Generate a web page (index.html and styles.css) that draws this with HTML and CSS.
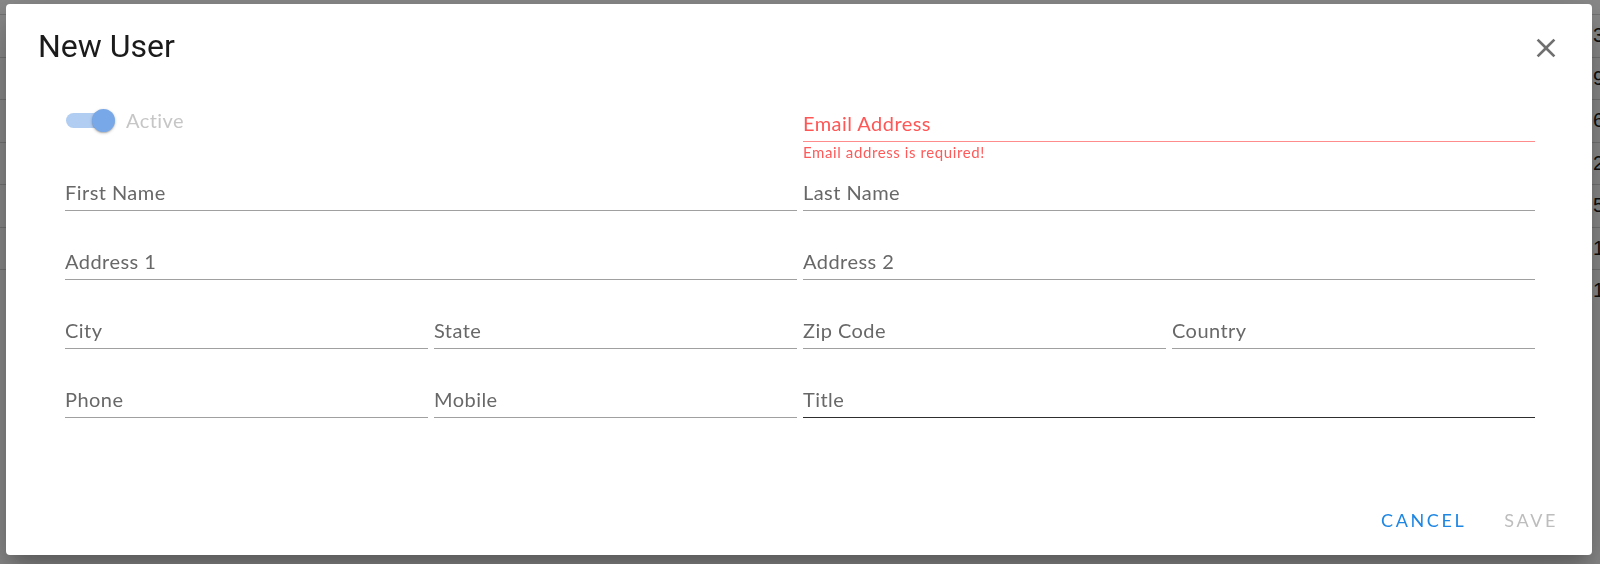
FILE: index.html
```html
<!DOCTYPE html>
<html lang="en">
<head>
<meta charset="utf-8">
<title>New User</title>
<link rel="stylesheet" href="styles.css">
</head>
<body>
<div class="page">
  <div class="bg-row">3</div>
  <div class="bg-row">9</div>
  <div class="bg-row">6</div>
  <div class="bg-row">2</div>
  <div class="bg-row">5</div>
  <div class="bg-row">1</div>
  <div class="bg-row bg-row-last">1</div>
</div>
<div class="backdrop"></div>
<div class="dialog" role="dialog">
  <header class="dialog-header">
    <h2 class="dialog-title">New User</h2>
    <button class="close-btn" type="button" aria-label="Close">
      <svg viewBox="0 0 24 24" width="32" height="32"><path d="M19 6.41L17.59 5 12 10.59 6.41 5 5 6.41 10.59 12 5 17.59 6.41 19 12 13.41 17.59 19 19 17.59 13.41 12z"/></svg>
    </button>
  </header>
  <form class="form-grid">
    <div class="field span-2">
      <div class="switch-row">
        <span class="switch"><span class="switch-track"></span><span class="switch-thumb"></span></span>
        <span class="switch-label">Active</span>
      </div>
    </div>
    <div class="field span-2 error">
      <div class="control"><span class="label">Email Address</span></div>
      <div class="helper">Email address is required!</div>
    </div>
    <div class="field span-2"><div class="control"><span class="label">First Name</span></div></div>
    <div class="field span-2"><div class="control"><span class="label">Last Name</span></div></div>
    <div class="field span-2"><div class="control"><span class="label">Address 1</span></div></div>
    <div class="field span-2"><div class="control"><span class="label">Address 2</span></div></div>
    <div class="field"><div class="control"><span class="label">City</span></div></div>
    <div class="field"><div class="control"><span class="label">State</span></div></div>
    <div class="field"><div class="control"><span class="label">Zip Code</span></div></div>
    <div class="field"><div class="control"><span class="label">Country</span></div></div>
    <div class="field"><div class="control"><span class="label">Phone</span></div></div>
    <div class="field"><div class="control"><span class="label">Mobile</span></div></div>
    <div class="field span-2 hovered"><div class="control"><span class="label">Title</span></div></div>
  </form>
  <div class="actions">
    <button class="btn btn-primary" type="button">Cancel</button>
    <button class="btn btn-disabled" type="button">Save</button>
  </div>
</div>
</body>
</html>
```
FILE: styles.css
```css
* { box-sizing: border-box; }
html, body { margin: 0; height: 100%; }
body {
  background: #fff;
  font-family: Lato, "Open Sans", sans-serif;
  overflow: hidden;
  position: relative;
}
.page { padding-top: 14px; }
.bg-row {
  height: 42.5px;
  border-top: 1px solid #d6d6d6;
  padding-left: 1593px;
  display: flex;
  align-items: center;
  white-space: nowrap;
  overflow: hidden;
  font: 20px "Liberation Sans", sans-serif;
  color: #1a1a1a;
}
.backdrop {
  position: fixed;
  inset: 0;
  background: rgba(0, 0, 0, 0.46);
}
.dialog {
  position: absolute;
  left: 6px;
  top: 4px;
  width: 1586px;
  height: 551px;
  background: #fff;
  border-radius: 4px;
  box-shadow: 0 11px 15px -7px rgba(0,0,0,.2), 0 24px 38px 3px rgba(0,0,0,.14), 0 9px 46px 8px rgba(0,0,0,.12);
  display: flex;
  flex-direction: column;
}
.dialog-header {
  display: flex;
  align-items: center;
  justify-content: space-between;
  padding: 24px 30px 0 32px;
}
.dialog-title {
  margin: 0;
  font: 400 32px/36px Roboto, sans-serif;
  color: #1b1b1b;
}
.close-btn {
  border: 0;
  background: none;
  padding: 0;
  margin-top: 3px;
  width: 32px;
  height: 32px;
  display: flex;
  cursor: pointer;
}
.close-btn svg { fill: #707070; }
.form-grid {
  display: grid;
  grid-template-columns: repeat(4, 1fr);
  column-gap: 6px;
  margin: 30px 57px 0 59px;
}
.span-2 { grid-column: span 2; }
.field { height: 69px; }
.control {
  height: 48px;
  border-bottom: 1px solid #a0a0a0;
  display: flex;
  align-items: flex-end;
  padding-bottom: 6px;
}
.label {
  font-size: 20px;
  line-height: 1.2;
  letter-spacing: 0.45px;
  color: #686868;
}
.helper {
  margin-top: 1px;
  font-size: 15px;
  line-height: 1.2;
  letter-spacing: 0.6px;
  color: #ff5a5a;
}
.error .control { border-bottom-color: #ff8c8c; }
.error .label { color: #ff5656; }
.hovered .control { border-bottom-color: #2e2e2e; }
.switch-row {
  height: 48px;
  padding-top: 4px;
  padding-left: 1px;
  display: flex;
  align-items: center;
  gap: 11px;
}
.switch {
  position: relative;
  width: 49px;
  height: 23px;
}
.switch-track {
  position: absolute;
  left: 0;
  top: 4px;
  width: 38px;
  height: 15px;
  border-radius: 8px;
  background: #b1cdf2;
}
.switch-thumb {
  position: absolute;
  right: 0;
  top: 0;
  width: 23px;
  height: 23px;
  border-radius: 50%;
  background: #78a8e7;
  box-shadow: 0 1px 3px rgba(0,0,0,.25), 0 1px 1px rgba(0,0,0,.12);
}
.switch-label {
  font-size: 20px;
  line-height: 1.2;
  letter-spacing: 0.45px;
  color: #c6c6c6;
}
.actions {
  margin-top: auto;
  display: flex;
  justify-content: flex-end;
  gap: 22px;
  padding: 0 26px 16px 0;
}
.btn {
  border: 0;
  background: none;
  padding: 8px;
  font: 400 18px/22px Lato, sans-serif;
  letter-spacing: 2.6px;
  text-transform: uppercase;
  cursor: pointer;
}
.btn-primary { color: #1e86e3; }
.btn-disabled { color: #bdbdbd; cursor: default; }
```
